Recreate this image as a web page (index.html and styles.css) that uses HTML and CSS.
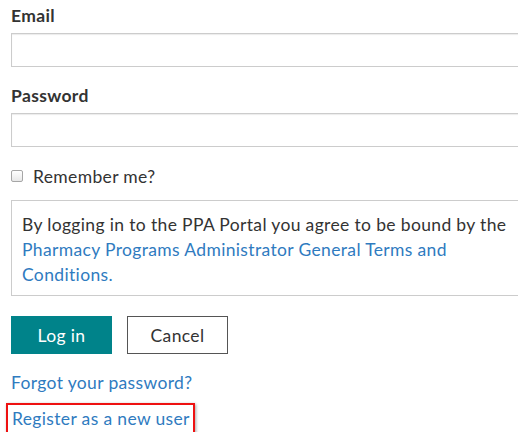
FILE: index.html
```html
<!DOCTYPE html>
<html>
<head>
<meta charset="utf-8">
<link rel="stylesheet" href="styles.css">
</head>
<body>
<form class="login">
  <div class="field">
    <label class="label" for="email">Email</label>
    <input class="input" id="email" type="text">
  </div>
  <div class="field">
    <label class="label" for="password">Password</label>
    <input class="input" id="password" type="password">
  </div>
  <label class="remember">
    <span class="check"></span>
    <span>Remember me?</span>
  </label>
  <div class="terms">
    <p class="terms-text">By logging in to the PPA Portal you agree to be bound by the
    <a class="link" href="#">Pharmacy Programs Administrator General Terms and Conditions.</a></p>
  </div>
  <div class="actions">
    <button class="btn btn-primary" type="button">Log in</button>
    <button class="btn btn-default" type="button">Cancel</button>
  </div>
  <p class="extra"><a class="link" href="#">Forgot your password?</a></p>
  <p class="extra register"><a class="link" href="#">Register as a new user</a></p>
</form>
</body>
</html>
```
FILE: styles.css
```css
html, body {
  margin: 0;
  padding: 0;
  background: #fff;
  overflow: hidden;
}

body {
  font-family: Lato, "Open Sans", sans-serif;
  font-size: 17.5px;
  letter-spacing: 0.35px;
  color: #333;
}

.login {
  padding: 4px 0 0 11px;
  width: 560px;
}

.field {
  display: flex;
  flex-direction: column;
  margin-bottom: 17px;
}

.label {
  font-weight: bold;
  line-height: 24px;
  margin-bottom: 5px;
}

.input {
  box-sizing: border-box;
  height: 34px;
  width: 100%;
  border: 1px solid #ccc;
  box-shadow: inset 0 1px 1px rgba(0, 0, 0, .08);
  margin: 0;
}

.remember {
  display: flex;
  align-items: center;
  gap: 10px;
  height: 24px;
  margin: 8px 0 0;
}

.check {
  box-sizing: border-box;
  width: 12px;
  height: 12px;
  border: 1px solid #a6a6a6;
  border-radius: 2px;
  background: linear-gradient(#fff, #e8e8e8);
}

.terms {
  margin-top: 12px;
  box-sizing: border-box;
  height: 96px;
  border: 1px solid #ccc;
  padding: 11px 10px;
}

.terms-text {
  margin: 0;
  width: 500px;
  line-height: 25px;
}

.link {
  color: #2f7bbf;
  text-decoration: none;
}

.actions {
  display: flex;
  gap: 15px;
  margin-top: 20px;
}

.btn {
  box-sizing: border-box;
  width: 101px;
  height: 38px;
  font-family: inherit;
  font-size: inherit;
  letter-spacing: inherit;
  margin: 0;
  cursor: pointer;
}

.btn-primary {
  background: #00838a;
  border: 1px solid #00838a;
  color: #fff;
}

.btn-default {
  background: #fff;
  border: 1px solid #555;
  color: #333;
}

.extra {
  margin: 17px 0 0;
  line-height: 24px;
}

.register {
  display: inline-block;
  margin: 8px 0 0 -5px;
  padding: 2px 3px 8px 4px;
  border: 2px solid #e11;
  box-shadow: 1px 1px 3px rgba(0, 0, 0, .35);
}
```
